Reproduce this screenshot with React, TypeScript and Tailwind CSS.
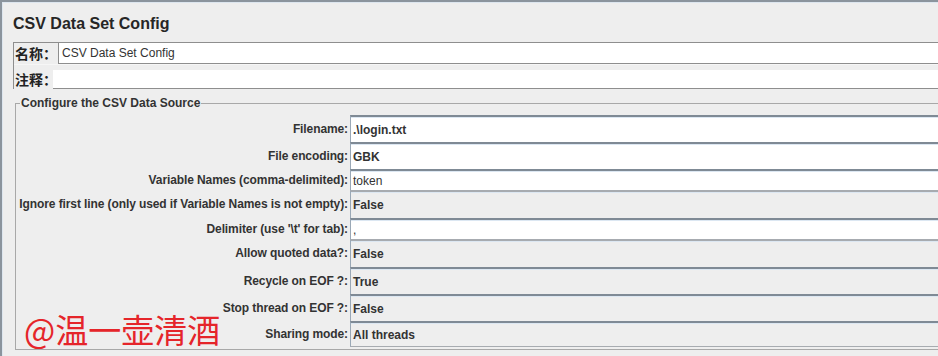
import React from "react";

type Row = {
  label: string;
  value: string;
  h: string;
  kind: "text" | "combo";
  top: "dark" | "light";
  bold: boolean;
  last?: boolean;
};

const rows: Row[] = [
  { label: "Filename:", value: ".\\login.txt", h: "h-[27px]", kind: "text", top: "dark", bold: true },
  { label: "File encoding:", value: "GBK", h: "h-[27px]", kind: "text", top: "dark", bold: true },
  { label: "Variable Names (comma-delimited):", value: "token", h: "h-[21px]", kind: "text", top: "dark", bold: false },
  { label: "Ignore first line (only used if Variable Names is not empty):", value: "False", h: "h-[28px]", kind: "combo", top: "light", bold: true },
  { label: "Delimiter (use '\\t' for tab):", value: ",", h: "h-[21px]", kind: "text", top: "dark", bold: false },
  { label: "Allow quoted data?:", value: "False", h: "h-[28px]", kind: "combo", top: "light", bold: true },
  { label: "Recycle on EOF ?:", value: "True", h: "h-[27px]", kind: "combo", top: "dark", bold: true },
  { label: "Stop thread on EOF ?:", value: "False", h: "h-[27px]", kind: "combo", top: "dark", bold: true },
  { label: "Sharing mode:", value: "All threads", h: "h-[26px]", kind: "combo", top: "dark", bold: true, last: true },
];

export default function App() {
  return (
    <div className="relative w-[938px] h-[356px] overflow-hidden bg-[#eeeeee] border-t-2 border-l-2 border-[#8b949d] font-['Liberation_Sans',Arial,sans-serif] text-[#333333]">
      <div className="h-full border-t border-l border-[#dde6ef]">
        <div className="ml-[10px] mt-[11px] h-[20px] leading-[20px] text-[16px] font-bold text-[#262626]">
          CSV Data Set Config
        </div>

        <div className="ml-[10px] mt-[8px] w-[940px] border-t border-l border-[#8e8e8e]">
          <div className="flex h-[21px]">
            <div className="w-[44px] shrink-0 pl-[1px] flex items-center whitespace-nowrap text-[14px] font-bold font-['Noto_Sans_CJK_SC',sans-serif] text-[#222]">
              名称：
            </div>
            <div className="flex-1 bg-white border-l border-b border-[#8e8e8e] flex items-center pl-[3px] text-[12px] text-[#333]">
              CSV Data Set Config
            </div>
          </div>
          <div className="h-[6px] border-t border-[#f6f6f6]" />
          <div className="flex h-[19px]">
            <div className="w-[39px] shrink-0 pl-[1px] flex items-center whitespace-nowrap text-[14px] font-bold font-['Noto_Sans_CJK_SC',sans-serif] text-[#222]">
              注释：
            </div>
            <div className="flex-1 bg-white border-b border-[#8e8e8e]" />
          </div>
        </div>

        <fieldset className="ml-[12px] mt-[7px] w-[960px] border border-[#a8a8a8] pt-[5px] pb-[2px]">
          <legend className="ml-[4px] px-[1px] h-[14px] leading-[14px] text-[12px] font-bold text-[#333]">
            Configure the CSV Data Source
          </legend>
          <div className="grid grid-cols-[334px_1fr]">
            {rows.map((r) => (
              <React.Fragment key={r.label}>
                <div className={`${r.h} flex items-center justify-end pr-[2px] text-[12px] tracking-[-0.1px] font-bold whitespace-nowrap text-[#333]`}>
                  {r.label}
                </div>
                <div
                  className={`${r.h} flex items-center pl-[2px] text-[12px] text-[#333] border-l border-l-[#9aa8b6] border-t-2 ${
                    r.top === "dark" ? "border-t-[#7f8a95]" : "border-t-[#a7abb0]"
                  } ${r.kind === "text" ? "bg-white" : "bg-[#eeeeee]"} ${
                    r.last ? "border-b border-b-[#a7abb0]" : ""
                  } ${r.bold ? "font-bold" : ""} shadow-[inset_0_1px_0_#dce7f2]`}
                >
                  {r.value}
                </div>
              </React.Fragment>
            ))}
          </div>
        </fieldset>
      </div>

      <div className="absolute left-[22px] top-[311px] text-[33px] leading-none text-[#e5252a] font-['Noto_Sans_CJK_SC',sans-serif]">
        @温一壶清酒
      </div>
    </div>
  );
}
